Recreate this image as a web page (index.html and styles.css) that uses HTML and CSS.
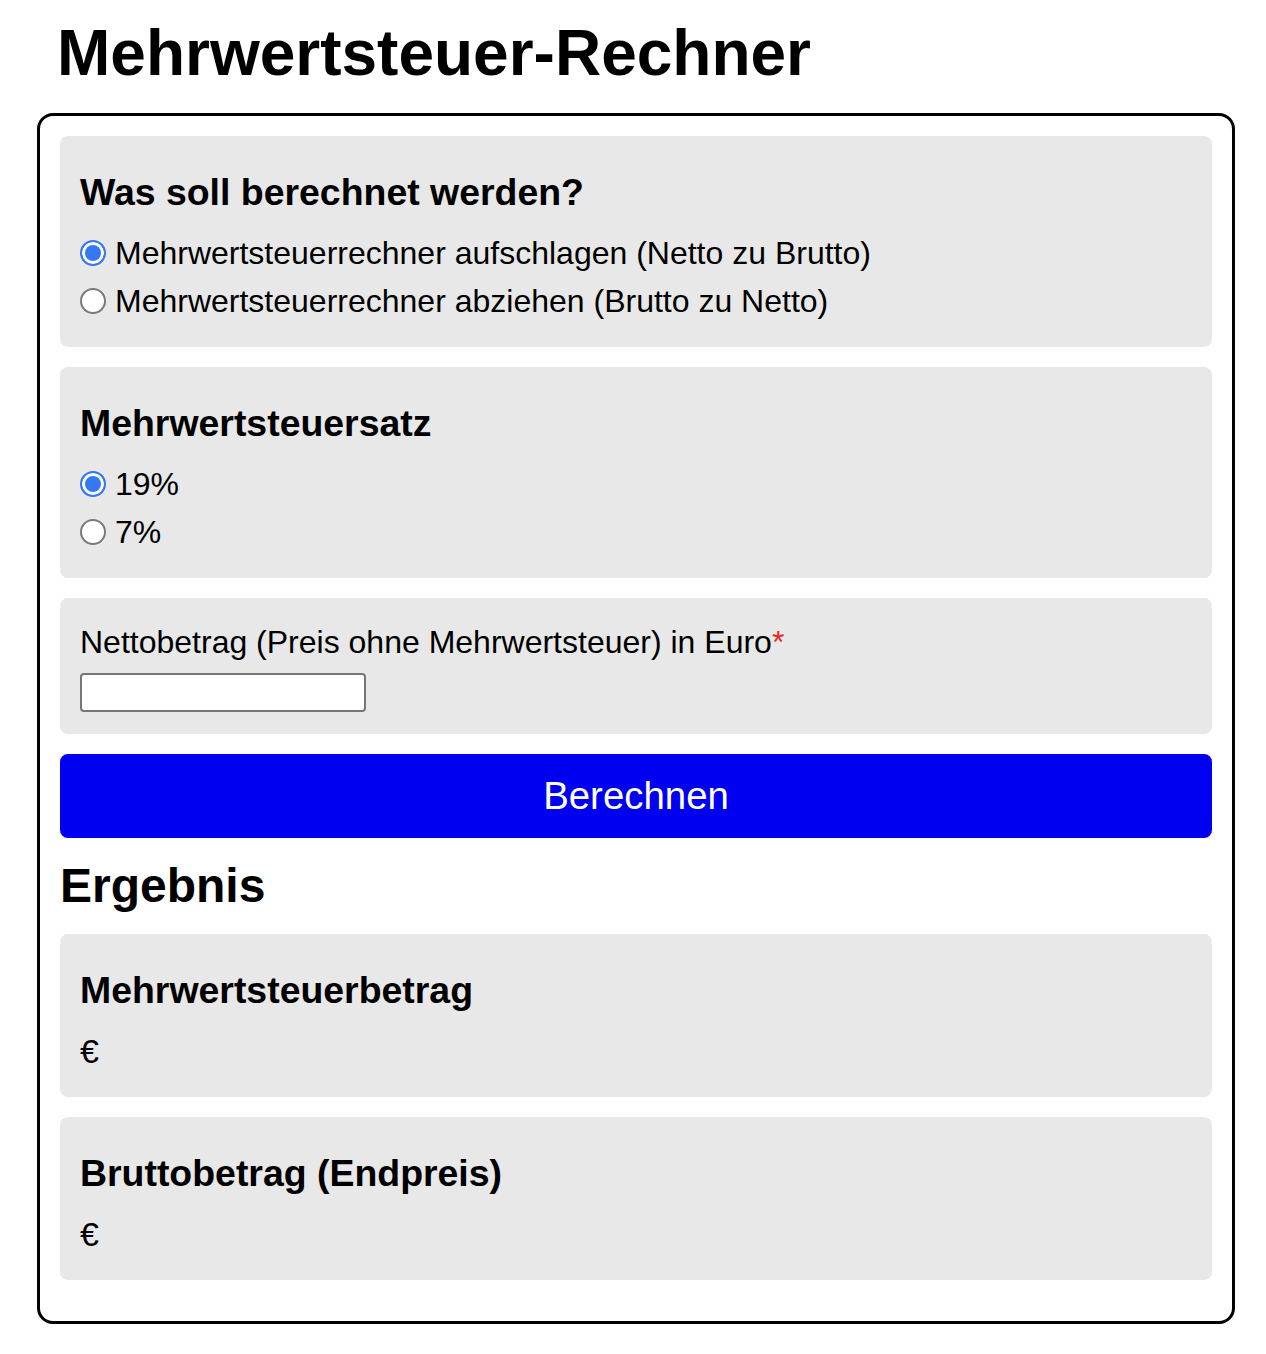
FILE: index.html
```html
<!DOCTYPE html>
<html lang="de">
<head>
<meta charset="utf-8">
<title>Mehrwertsteuer-Rechner</title>
<link rel="stylesheet" href="styles.css">
</head>
<body>
<h1 class="title">Mehrwertsteuer-Rechner</h1>
<form class="calc">
  <section class="panel">
    <h3 class="panel-title">Was soll berechnet werden?</h3>
    <label class="option"><span class="radio checked"></span>Mehrwertsteuerrechner aufschlagen (Netto zu Brutto)</label>
    <label class="option"><span class="radio"></span>Mehrwertsteuerrechner abziehen (Brutto zu Netto)</label>
  </section>
  <section class="panel">
    <h3 class="panel-title">Mehrwertsteuersatz</h3>
    <label class="option"><span class="radio checked"></span>19%</label>
    <label class="option"><span class="radio"></span>7%</label>
  </section>
  <section class="panel panel-field">
    <label class="field-label">Nettobetrag (Preis ohne Mehrwertsteuer) in Euro<span class="req">*</span></label>
    <span class="input"></span>
  </section>
  <button type="button" class="submit">Berechnen</button>
  <h2 class="result-title">Ergebnis</h2>
  <section class="panel">
    <h3 class="panel-title">Mehrwertsteuerbetrag</h3>
    <div class="value">€</div>
  </section>
  <section class="panel">
    <h3 class="panel-title">Bruttobetrag (Endpreis)</h3>
    <div class="value">€</div>
  </section>
</form>
</body>
</html>
```

FILE: styles.css
```css
* { box-sizing: border-box; }
html, body { margin: 0; padding: 0; background: #fff; }
body {
  font-family: "Liberation Sans", Arial, Helvetica, sans-serif;
  color: #000;
  font-size: 32px;
}
.title {
  margin: 16px 0 23px 57px;
  font-size: 64px;
  line-height: 74px;
  font-weight: bold;
}
.calc {
  margin-left: 37px;
  width: 1198px;
  border: 3px solid #000;
  border-radius: 16px;
  padding: 20px 20px 41px;
  display: flex;
  flex-direction: column;
  gap: 20px;
}
.panel {
  background: #e8e8e8;
  border-radius: 8px;
  padding: 20px 20px 22px;
  display: flex;
  flex-direction: column;
}
.panel-title {
  margin: 14px 0 15px;
  font-size: 37.44px;
  line-height: 44px;
  font-weight: bold;
}
.option {
  display: flex;
  align-items: center;
  height: 48px;
  line-height: 48px;
}
.radio {
  width: 26px;
  height: 26px;
  border-radius: 50%;
  border: 2px solid #7a7a7a;
  background: #fff;
  margin-right: 9px;
  flex: none;
}
.radio.checked {
  border: 2px solid #3478f6;
  background: #3478f6;
  box-shadow: inset 0 0 0 3px #fff;
}
.field-label {
  line-height: 48px;
}
.req { color: #e8281e; }
.input {
  display: block;
  margin-top: 7px;
  width: 286px;
  height: 39px;
  background: #fff;
  border: 2px solid #767676;
  border-radius: 4px;
}
.value {
  line-height: 48px;
  height: 48px;
  font-size: 34px;
}
.submit {
  height: 84px;
  border: none;
  border-radius: 8px;
  background: #0000f0;
  color: #fff;
  font-family: "Liberation Sans", Arial, Helvetica, sans-serif;
  font-size: 38.4px;
  padding: 0;
}
.result-title {
  margin: 0;
  font-size: 48px;
  line-height: 56px;
  font-weight: bold;
}
```
